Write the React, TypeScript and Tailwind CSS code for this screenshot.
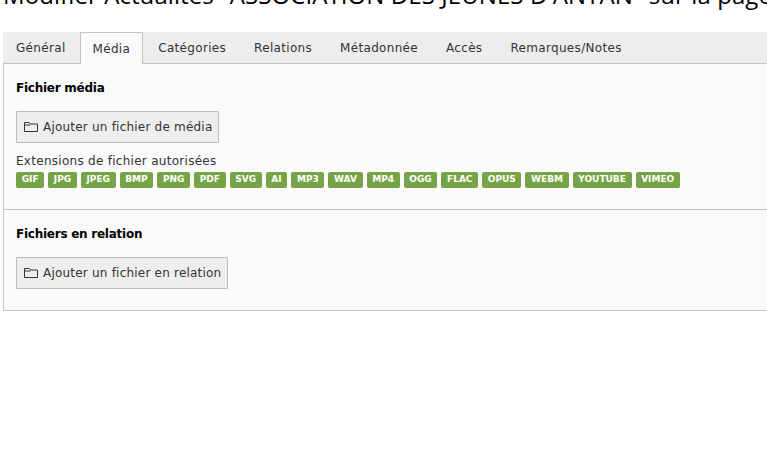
const tabs = [
  "Général",
  "Média",
  "Catégories",
  "Relations",
  "Métadonnée",
  "Accès",
  "Remarques/Notes",
];

const extensions = [
  "GIF",
  "JPG",
  "JPEG",
  "BMP",
  "PNG",
  "PDF",
  "SVG",
  "AI",
  "MP3",
  "WAV",
  "MP4",
  "OGG",
  "FLAC",
  "OPUS",
  "WEBM",
  "YOUTUBE",
  "VIMEO",
];

function FolderIcon() {
  return (
    <svg className="h-[12px] w-[14px] shrink-0" viewBox="0 0 14 12" fill="none" stroke="#333333">
      <path d="M0.5 10.5V1.5H5L6.5 3H13.5V10.5Z" />
      <path d="M0.5 4H6.5" />
    </svg>
  );
}

function AddButton({ label }: { label: string }) {
  return (
    <button className="flex h-[32px] items-center gap-[5px] rounded-[1px] border border-[#bbbbbb] bg-[#eeeeee] pl-[7px] pr-[6px] text-[12px] tracking-[0.21px] text-[#333333]">
      <FolderIcon />
      {label}
    </button>
  );
}

export default function App() {
  return (
    <div className="h-[457px] w-[767px] overflow-hidden bg-white font-['DejaVu_Sans',sans-serif]">
      <h1 className="mt-[-22px] whitespace-nowrap pl-[3px] font-['Open_Sans',sans-serif] text-[24px] leading-[34px] tracking-[0.08px] text-black">
        Modifier Actualités "ASSOCIATION DES JEUNES D'ANTAN" sur la page
      </h1>
      <div className="ml-[3px] mt-[20px] w-[780px]">
        <div className="flex h-[32px] gap-[2px] border-b border-[#c3c3c3] bg-[#ededed]">
          {tabs.map((tab) =>
            tab === "Média" ? (
              <div
                className="z-10 -ml-px flex h-[32px] items-center border border-b-0 border-[#c3c3c3] bg-[#fafafa] px-[12px] text-[12px] tracking-[0.32px] text-[#333333]"
                key={tab}
              >
                {tab}
              </div>
            ) : (
              <div
                className="flex h-[31px] items-center px-[13px] text-[12px] tracking-[0.32px] text-[#333333]"
                key={tab}
              >
                {tab}
              </div>
            ),
          )}
        </div>
        <div className="border-b border-l border-[#c3c3c3] bg-[#fafafa]">
          <section className="border-b border-[#c3c3c3] px-[12px] pb-[21px] pt-[17px]">
            <h2 className="text-[12px] font-bold leading-[15px] tracking-[-0.25px] text-black">
              Fichier média
            </h2>
            <div className="mt-[15px] flex">
              <AddButton label="Ajouter un fichier de média" />
            </div>
            <div className="mt-[11px] text-[12px] leading-[15px] tracking-[0.28px] text-[#333333]">
              Extensions de fichier autorisées
            </div>
            <div className="mt-[3px] flex gap-[4px]">
              {extensions.map((ext) => (
                <span
                  className="flex h-[16px] items-center rounded-[2px] bg-[#76a346] px-[5.65px] text-[9px] font-bold text-white"
                  key={ext}
                >
                  {ext}
                </span>
              ))}
            </div>
          </section>
          <section className="px-[12px] pb-[21px] pt-[17px]">
            <h2 className="text-[12px] font-bold leading-[15px] tracking-[-0.25px] text-black">
              Fichiers en relation
            </h2>
            <div className="mt-[15px] flex">
              <AddButton label="Ajouter un fichier en relation" />
            </div>
          </section>
        </div>
      </div>
    </div>
  );
}
